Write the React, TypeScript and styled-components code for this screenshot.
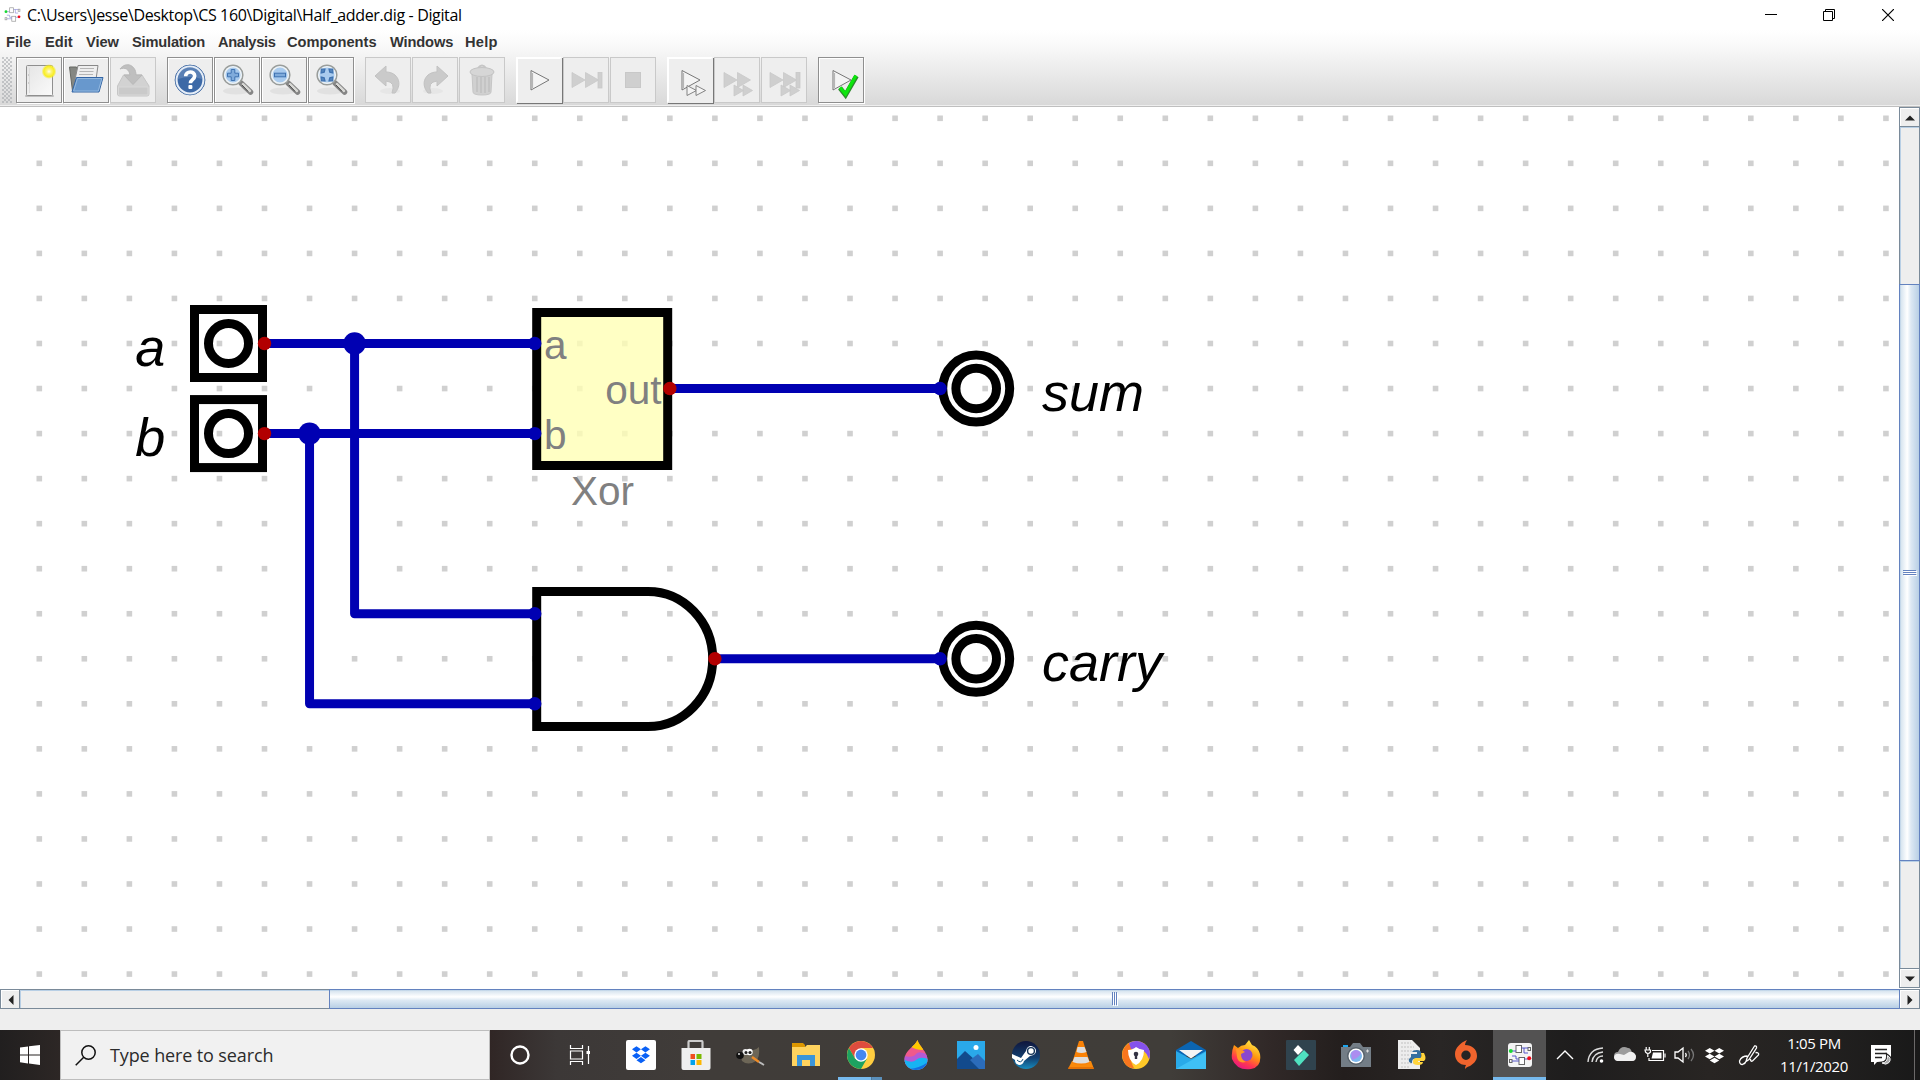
import React from "react";
import styled, { createGlobalStyle } from "styled-components";

const GlobalStyle = createGlobalStyle`
  html, body { margin: 0; padding: 0; overflow: hidden; background: #eee; }
  * { box-sizing: border-box; }
`;

const Screen = styled.div`
  width: 1920px;
  height: 1080px;
  display: flex;
  flex-direction: column;
  overflow: hidden;
  font-family: "Liberation Sans", Arial, sans-serif;
`;

const TitleBar = styled.header`
  height: 30px;
  display: flex;
  align-items: center;
  background: #fff;
`;
const TitleIcon = styled.div`
  width: 27px;
  height: 30px;
  padding: 6px 0 0 4px;
`;
const TitleText = styled.span`
  flex: 1;
  font-family: "Open Sans", "Noto Sans", sans-serif;
  font-size: 16px;
  line-height: 30px;
  letter-spacing: -0.36px;
  color: #000;
  white-space: nowrap;
`;
const WindowButtons = styled.div`
  display: flex;
  height: 30px;
  padding-right: 3px;
`;
const WindowButton = styled.div`
  width: 58.5px;
  display: flex;
  align-items: center;
  justify-content: center;
`;

const Chrome = styled.div`
  height: 77px;
  display: flex;
  flex-direction: column;
  background: linear-gradient(#fff 0%, #fafafa 18%, #d8d8d8 100%);
  border-bottom: 1px solid #bfbfbf;
  box-shadow: inset 0 -1px 0 #eee;
`;
const MenuBar = styled.nav`
  height: 26px;
  display: flex;
  padding-left: 6px;
  font-size: 14.67px;
  font-weight: 700;
  line-height: 25px;
  color: #333;
`;
const MenuItem = styled.span<{ $w: number; $tracking: number }>`
  flex: none;
  width: ${(p) => p.$w}px;
  letter-spacing: ${(p) => p.$tracking}px;
  white-space: nowrap;
`;
const menus = [
  { label: "File", w: 39, tracking: 0 },
  { label: "Edit", w: 41, tracking: 0 },
  { label: "View", w: 46, tracking: -0.1 },
  { label: "Simulation", w: 86, tracking: -0.2 },
  { label: "Analysis", w: 69, tracking: -0.35 },
  { label: "Components", w: 103, tracking: 0 },
  { label: "Windows", w: 75, tracking: -0.15 },
  { label: "Help", w: 40, tracking: 0.2 },
];

const ToolBar = styled.div`
  display: flex;
  height: 48px;
  padding: 1px 0 0 2px;
`;
const Grip = styled.div`
  width: 10px;
  height: 46px;
  margin-right: 4px;
  background-image: radial-gradient(circle at 1px 1px, #a6a9ad 0.5px, transparent 1px),
    radial-gradient(circle at 3px 3px, #a6a9ad 0.5px, transparent 1px);
  background-size: 4px 4px;
`;
const ToolGroup = styled.div`
  display: flex;
  gap: 1px;
  margin-right: 11px;
`;
type ToolMode = "normal" | "disabled" | "raised";
const edge: Record<ToolMode, string> = {
  normal: "border: 1px solid #8f8f8f; box-shadow: 1px 1px 0 #fff, inset 1px 1px 0 #fff;",
  disabled: "border: 1px solid #c9c9c9;",
  raised:
    "border: 2px solid; border-color: #fff #eee #eee #fff; box-shadow: 1px 1px 0 #777;",
};
const ToolButton = styled.div<{ $mode: ToolMode }>`
  width: 46px;
  height: 46px;
  display: flex;
  align-items: center;
  justify-content: center;
  background: #eee;
  ${(p) => edge[p.$mode]}
  svg {
    flex: none;
  }
`;

const Workspace = styled.main`
  height: 882px;
  display: flex;
  background: #fff;
`;
const Canvas = styled.div`
  width: 1899px;
  height: 881px;
  overflow: hidden;
`;
const VScroll = styled.div`
  width: 21px;
  height: 881px;
  display: flex;
  flex-direction: column;
  background: #eee;
  border: 1px solid #7a8a99;
  box-shadow: inset 1px 0 0 #b8cfe5;
`;
const HScroll = styled.div`
  height: 20px;
  display: flex;
  background: #eee;
  border: 1px solid #7a8a99;
  box-shadow: inset 0 1px 0 #b8cfe5;
`;
const ScrollButton = styled.div<{ $w?: number }>`
  flex: none;
  width: ${(p) => p.$w ?? 19}px;
  height: 18px;
  display: flex;
  align-items: center;
  justify-content: center;
  background: #eee;
  border: solid #fff;
  border-width: 1px 0 0 1px;
`;
const VTrack = styled.div<{ $size: number; $end?: boolean }>`
  flex: none;
  height: ${(p) => p.$size}px;
  border: solid #7a8a99;
  border-width: ${(p) => (p.$end ? "0 0 1px 0" : "1px 0 0 0")};
  box-shadow: inset 1px 1px 0 #b8cfe5;
`;
const VThumb = styled.div`
  flex: none;
  height: 577px;
  margin: 0 -1px;
  padding-top: 2px;
  display: flex;
  align-items: center;
  justify-content: center;
  border: 1px solid #6382bf;
  background: linear-gradient(90deg, #b8cfe5 0, #dbe7f1 8%, #fff 38%, #dce8f3 58%, #b8cfe5 100%);
`;
const HTrack = styled.div`
  flex: none;
  width: 310px;
  border-left: 1px solid #7a8a99;
  box-shadow: inset 1px 1px 0 #b8cfe5;
`;
const HThumb = styled.div`
  flex: none;
  width: 1571px;
  margin: -1px 0;
  padding-left: 2px;
  display: flex;
  align-items: center;
  justify-content: center;
  border: 1px solid #6382bf;
  background: linear-gradient(#b8cfe5 0, #dbe7f1 8%, #fff 38%, #dce8f3 58%, #b8cfe5 100%);
`;
const StatusBar = styled.div`
  height: 21px;
  background: #eee;
`;

const TaskBar = styled.footer`
  height: 50px;
  display: flex;
  background: linear-gradient(
    90deg,
    #211f1f 0,
    #302927 4%,
    #302625 25.5%,
    #3c3837 29%,
    #403c39 36%,
    #403d39 61%,
    #312928 66%,
    #231e1d 70%,
    #292625 75%,
    #1e1d1d 82%,
    #282523 89%,
    #242221 94%,
    #191919 100%
  );
`;
const StartButton = styled.div`
  width: 60px;
  display: flex;
  align-items: center;
  justify-content: center;
`;
const SearchBox = styled.div`
  width: 430px;
  display: flex;
  align-items: center;
  padding-left: 14px;
  border: 1px solid #bdbdbd;
  background: #f1f1f1;
`;
const SearchText = styled.span`
  margin-left: 14px;
  font-family: "Open Sans", "Noto Sans", sans-serif;
  font-size: 18px;
  letter-spacing: -0.12px;
  color: #2b2b2b;
  white-space: nowrap;
`;
const TaskSlot = styled.div<{ $w: number; $active?: boolean; $running?: boolean }>`
  width: ${(p) => p.$w}px;
  height: 50px;
  display: flex;
  flex: none;
  align-items: center;
  justify-content: center;
  background: ${(p) => (p.$active ? "#535252" : "transparent")};
  ${(p) => p.$active && "box-shadow: inset 0 -3px 0 #76b9ed;"}
  ${(p) =>
    p.$running &&
    `background: linear-gradient(90deg, #76b9ed 33px, #47647c 33px, #5a8fba 34px) 5px 47px / 44px 3px no-repeat;`}
`;
const Clock = styled.div`
  flex: none;
  width: 84px;
  height: 50px;
  padding-top: 2px;
  font-family: "Open Sans", "Noto Sans", sans-serif;
  font-size: 15px;
  line-height: 23px;
  letter-spacing: -0.35px;
  text-align: center;
  color: #fff;
`;
const ShowDesktop = styled.div`
  flex: none;
  width: 6px;
  margin-left: auto;
  border-left: 1px solid #6b6969;
`;

const Lens = ({ x, y }: { x: number; y: number }) => (
  <g transform={`translate(${x} ${y})`}>
    <circle cx="10" cy="10" r="9.8" fill="#a9cbee" stroke="#9a9d9a" strokeWidth="1.6" />
    <circle cx="10" cy="10" r="8.3" fill="none" stroke="#eef2f4" strokeWidth="1.6" />
  </g>
);

const Magnifier = ({ kind }: { kind: "in" | "out" | "fit" }) => (
  <svg width="36" height="36" viewBox="0 0 36 36">
    <ellipse cx="17" cy="29" rx="13" ry="3.5" fill="#000" opacity="0.05" />
    <path d="M22 21 L31.5 30" stroke="#858585" strokeWidth="5.5" strokeLinecap="round" />
    <path d="M24 22.2 L31 29" stroke="#d8d8d5" strokeWidth="2.5" strokeLinecap="round" />
    <path d="M23 23 L29 29.4" stroke="#4d4d4d" strokeWidth="1" />
    <Lens x={4} y={3} />
    {kind === "in" && (
      <path d="M12.2 7.5h3.6v3.7h3.7v3.6h-3.7v3.7h-3.6v-3.7H8.5v-3.6h3.7z" fill="#7fabdb" stroke="#3f72b0" />
    )}
    {kind === "out" && (
      <rect x="8.5" y="11.2" width="11" height="3.6" fill="#7fabdb" stroke="#3f72b0" />
    )}
    {kind === "fit" && (
      <path
        d="M8.2 11V7.2H12L11.2 10.2zM19.8 11V7.2H16L16.8 10.2zM8.2 15v3.8H12L11.2 15.8zM19.8 15v3.8H16L16.8 15.8z"
        fill="#5385bd"
        stroke="#3f72b0"
        strokeWidth="1.2"
      />
    )}
  </svg>
);

const NewIcon = () => (
  <svg width="38" height="38" viewBox="0 0 38 38">
    <defs>
      <linearGradient id="paper" x1="0" y1="0" x2="1" y2="1">
        <stop offset="0" stopColor="#e5e5e5" />
        <stop offset="1" stopColor="#fafafa" />
      </linearGradient>
      <radialGradient id="star">
        <stop offset="0" stopColor="#fffef0" />
        <stop offset="0.3" stopColor="#fdf47a" />
        <stop offset="0.7" stopColor="#f8ee20" />
        <stop offset="1" stopColor="#f5e828" stopOpacity="0" />
      </radialGradient>
    </defs>
    <rect x="5" y="34" width="29" height="2" rx="1" fill="#000" opacity="0.2" />
    <rect x="6.5" y="4.5" width="26" height="30" rx="1" fill="url(#paper)" stroke="#8f8f8f" />
    <path d="M9.5 7v25" stroke="#dcdcdc" />
    <path d="M8 14h1M8 22h1" stroke="#aaa" />
    <circle cx="29" cy="10.5" r="7.5" fill="url(#star)" />
  </svg>
);

const OpenIcon = () => (
  <svg width="38" height="38" viewBox="0 0 38 38">
    <path d="M2.5 6h7l1 2h13v22H5.5z" fill="#858782" stroke="#666863" />
    <path d="M11 4.5h20l-2 14H8z" fill="#eee" stroke="#888" />
    <path d="M13 7.5h14M12.5 10.5h14M12 13.5h14" stroke="#b5b5b5" />
    <path d="M9.5 16.5h26.5L32 31H5z" fill="#6898cd" stroke="#3465a4" />
    <path d="M10.5 17.5h24.3L31.3 30H6.6z" fill="none" stroke="#94b9df" strokeWidth="1" />
  </svg>
);

const SaveIcon = () => (
  <svg width="38" height="38" viewBox="0 0 38 38">
    <path d="M3.5 33V25l6-11H28l7 11v8q0 2-2 2H5.500q-2 0-2-2z" fill="#d2d2d2" stroke="#c6c6c6" />
    <path d="M4.5 26H34v8H4.5z" fill="#cacaca" stroke="#d8d8d8" />
    <path d="M6 8C12 0 22 4 22 14h6l-9 9.5L10 14h6C15 8 11 6 6 8z" fill="#bfbfbf" stroke="#b8b8b8" />
  </svg>
);

const HelpIcon = () => (
  <svg width="34" height="34" viewBox="0 0 34 34">
    <circle cx="17" cy="17" r="14.9" fill="#3d69a6" stroke="#3c66a0" strokeWidth="1" />
    <circle cx="17" cy="17" r="13.4" fill="none" stroke="#e6eef8" strokeWidth="2" />
    <path d="M5 16a12 12 0 0 1 24 0q-12-4-24 0z" fill="#7797c4" opacity="0.5" />
    <path
      d="M12.7 13.3c0-5.8 9-5.7 9-.2 0 3.5-4.3 3.7-4.3 7.2"
      fill="none"
      stroke="#fff"
      strokeWidth="3.6"
    />
    <rect x="15.4" y="22" width="4" height="4" rx="1" fill="#fff" />
  </svg>
);

const UndoIcon = ({ flip }: { flip?: boolean }) => (
  <svg width="36" height="36" viewBox="0 0 36 36">
    <g transform={flip ? "translate(36 0) scale(-1 1)" : undefined}>
      <ellipse cx="20" cy="29" rx="10" ry="3" fill="#e6e6e6" />
      <path d="M5 14L16 4v6C28 10 33 22 25 31h-3q4-11-6-12v5z" fill="#cacaca" stroke="#c2c2c2" />
    </g>
  </svg>
);

const TrashIcon = () => (
  <svg width="36" height="36" viewBox="0 0 36 36">
    <path d="M14 6q4-5 8 0" fill="none" stroke="#c6c6c6" strokeWidth="2" />
    <path d="M8 12h20l-1 18q0 3-9 3t-9-3z" fill="#d0d0d0" stroke="#c6c6c6" />
    <path d="M13 15v15M17 15v16M21 15v16M25 15v15" stroke="#c3c3c3" strokeWidth="1.8" />
    <ellipse cx="18" cy="10" rx="12" ry="4.5" fill="#d6d6d6" stroke="#c3c3c3" />
  </svg>
);

const PlayIcon = ({ kind }: { kind: "play" | "micro" | "check" }) => (
  <svg width="42" height="42" viewBox="0 0 42 42">
    <path d="M13 11.5V31l18-10z" fill="#f4f4f4" stroke="#777" strokeWidth="1" />
    <path d="M14.3 14v15" stroke="#b5b5b5" strokeWidth="1.6" />
    {kind === "micro" && (
      <g fill="#f4f4f4" stroke="#777" strokeWidth="0.9">
        <path d="M18 26.5v10l9.5-5z" />
        <path d="M27 26.5v10l9.5-5z" />
      </g>
    )}
    {kind === "check" && (
      <>
        <path d="M20 29l5.5 7L36.5 17" fill="none" stroke="#2c8a2c" strokeWidth="4.8" />
        <path d="M20 28.5l5.5 6.5L36 16.5" fill="none" stroke="#0de60d" strokeWidth="3.4" />
      </>
    )}
  </svg>
);
const FastIcon = ({ bar, small }: { bar?: boolean; small?: boolean }) => (
  <svg width="42" height="42" viewBox="0 0 42 42" fill="#cfcfcf" stroke="#c8c8c8" strokeWidth="0.8">
    <path d={bar ? "M7 13.5v15L20 21zM20.5 13.5v15L33.5 21z" : "M8 13.5v15L21 21zM21.5 13.5v15L34.5 21z"} />
    {bar && <rect x="33" y="13.5" width="4" height="15.5" />}
    {small && <path d="M18 26v11l9.5-5.5zM27 26v11l9.5-5.5z" />}
  </svg>
);
const StopIcon = () => (
  <svg width="42" height="42" viewBox="0 0 42 42">
    <rect x="13.5" y="13.5" width="15" height="15" fill="#cfcfcf" stroke="#c8c8c8" />
  </svg>
);

const tools: { icon: React.ReactNode; mode: ToolMode }[][] = [
  [
    { icon: <NewIcon />, mode: "normal" },
    { icon: <OpenIcon />, mode: "normal" },
    { icon: <SaveIcon />, mode: "disabled" },
  ],
  [
    { icon: <HelpIcon />, mode: "normal" },
    { icon: <Magnifier kind="in" />, mode: "normal" },
    { icon: <Magnifier kind="out" />, mode: "normal" },
    { icon: <Magnifier kind="fit" />, mode: "normal" },
  ],
  [
    { icon: <UndoIcon />, mode: "disabled" },
    { icon: <UndoIcon flip />, mode: "disabled" },
    { icon: <TrashIcon />, mode: "disabled" },
  ],
  [
    { icon: <PlayIcon kind="play" />, mode: "raised" },
    { icon: <FastIcon bar />, mode: "disabled" },
    { icon: <StopIcon />, mode: "disabled" },
  ],
  [
    { icon: <PlayIcon kind="micro" />, mode: "raised" },
    { icon: <FastIcon small />, mode: "disabled" },
    { icon: <FastIcon bar small />, mode: "disabled" },
  ],
  [{ icon: <PlayIcon kind="check" />, mode: "normal" }],
];

const GRID = 45.04;
const gx = (n: number) => 39.3 + n * GRID;
const gy = (n: number) => 11.3 + n * GRID;
const WIRE = "#0000b2";

const InputPin = ({ row, label }: { row: number; label: string }) => (
  <g>
    <text x="165.2" y={gy(row) + 22} textAnchor="end" fontSize="54" fontStyle="italic">
      {label}
    </text>
    <rect x="194.5" y={gy(row) - 34} width="68" height="68" fill="none" stroke="#000" strokeWidth="9" />
    <circle cx="228.5" cy={gy(row)} r="20" fill="none" stroke="#000" strokeWidth="9" />
  </g>
);
const OutputPin = ({ row, label }: { row: number; label: string }) => (
  <g>
    <circle cx="976.2" cy={gy(row)} r="33.5" fill="none" stroke="#000" strokeWidth="9" />
    <circle cx="976.2" cy={gy(row)} r="20.3" fill="none" stroke="#000" strokeWidth="9" />
    <text x="1042" y={gy(row) + 22} fontSize="54" fontStyle="italic">
      {label}
    </text>
  </g>
);

const Circuit = () => {
  const dots: React.ReactNode[] = [];
  for (let r = 0; r < 20; r++)
    for (let c = 0; c < 42; c++)
      dots.push(
        <rect key={`${r}-${c}`} x={gx(c) - 2.8} y={gy(r) - 2.8} width="5.6" height="5.6" fill="#d0d0d0" />
      );
  const inputs: [number, number][] = [
    [11, 5],
    [11, 7],
    [11, 11],
    [11, 13],
    [20, 6],
    [20, 12],
  ];
  const outputs: [number, number][] = [
    [5, 5],
    [5, 7],
    [14, 6],
    [15, 12],
  ];
  return (
    <svg width="1899" height="881" viewBox="0 0 1899 881" fontFamily='"Liberation Sans", Arial, sans-serif'>
      {dots}
      <rect x="536.7" y="205.5" width="131" height="153" fill="#ffffb4" fillOpacity="0.78" stroke="#000" strokeWidth="9" />
      <path
        d="M536.7 484.5H648C683.5 484.5 712.7 514.5 712.7 552S683.5 619.5 648 619.5H536.7z"
        fill="none"
        stroke="#000"
        strokeWidth="9"
      />
      <InputPin row={5} label="a" />
      <InputPin row={7} label="b" />
      <OutputPin row={6} label="sum" />
      <OutputPin row={12} label="carry" />
      <g fill="none" stroke={WIRE} strokeWidth="9" strokeLinejoin="round">
        <path d={`M${gx(5) + 4} ${gy(5)}H${gx(11)}`} />
        <path d={`M${gx(5) + 4} ${gy(7)}H${gx(11)}`} />
        <path d={`M${gx(7)} ${gy(5)}V${gy(11)}H${gx(11)}`} />
        <path d={`M${gx(6)} ${gy(7)}V${gy(13)}H${gx(11)}`} />
        <path d={`M${gx(14)} ${gy(6)}H${gx(20)}`} />
        <path d={`M${gx(15)} ${gy(12)}H${gx(20)}`} />
      </g>
      <circle cx={gx(7)} cy={gy(5)} r="11.2" fill={WIRE} />
      <circle cx={gx(6)} cy={gy(7)} r="11.2" fill={WIRE} />
      {inputs.map(([c, r]) => (
        <circle key={`${c}-${r}`} cx={gx(c)} cy={gy(r)} r="6.7" fill={WIRE} />
      ))}
      {outputs.map(([c, r]) => (
        <circle key={`${c}-${r}`} cx={gx(c)} cy={gy(r)} r="6.7" fill="#b20000" />
      ))}
      <g fill="#808080" fontSize="40.5">
        <text x="544" y="251.5">a</text>
        <text x="544" y="341.5">b</text>
        <text x="661.5" y="296.5" textAnchor="end">out</text>
        <text x="602.5" y="398.4" textAnchor="middle">Xor</text>
      </g>
    </svg>
  );
};

const Arrow = ({ dir }: { dir: "up" | "down" | "left" | "right" }) => {
  const d = {
    up: "M0 7.5L5 2.5L10 7.5z",
    down: "M0 2.5L5 7.5L10 2.5z",
    left: "M7.5 0L2.5 5L7.5 10z",
    right: "M2.5 0L7.5 5L2.5 10z",
  }[dir];
  return (
    <svg width="10" height="10" viewBox="0 0 10 10">
      <path d={d} fill="#222" />
    </svg>
  );
};

const DigitalLogo = ({ size, plate }: { size: number; plate?: boolean }) => (
  <svg width={size} height={size} viewBox="0 0 24 24">
    {plate && <rect width="24" height="24" rx="3" fill="#f4f4f4" />}
    <g fill="none" stroke={plate ? "#666" : "#999"} strokeWidth="1">
      <rect x="8" y="2.5" width="5.5" height="7" fill="#fff" />
      <rect x="11" y="14.5" width="5.5" height="7" fill="#fff" />
      <rect x="20" y="4.5" width="2.5" height="3" />
      <rect x="1.5" y="16.5" width="2.5" height="3" />
    </g>
    <path
      d="M4 8h4M13.5 5H20M16 5v5h4M4 13h4v3h3M4 18h7M16.5 16H20"
      fill="none"
      stroke={plate ? "#4747c5" : "#8a8ad6"}
      strokeWidth="0.9"
    />
    <circle cx="2.8" cy="8" r="2" fill="#18d933" />
    <circle cx="21.2" cy="15.3" r="2" fill="#f00b1b" />
  </svg>
);

const dropboxPath =
  "M8 2l8 5-8 5-8-5zM24 2l8 5-8 5-8-5zM8 12.5l8 5-8 5-8-5zM24 12.5l8 5-8 5-8-5zM16 19.5l8 5-8 5-8-5z";

const Icon = ({ children }: { children: React.ReactNode }) => (
  <svg width="30" height="30" viewBox="0 0 30 30">
    {children}
  </svg>
);

const DropboxApp = () => (
  <Icon>
    <rect width="30" height="30" rx="2" fill="#fff" />
    <path transform="translate(6 5) scale(.56 .62)" d={dropboxPath} fill="#0a61f6" />
  </Icon>
);
const StoreApp = () => (
  <Icon>
    <path d="M7.500 10V2q0-1 1-1h12q1 0 1 1v8" fill="none" stroke="#ccc" strokeWidth="2.200" />
    <path d="M.5 8h29v20q0 2-2 2h-25q-2 0-2-2z" fill="#efefef" />
    <path fill="#f04e1f" d="M9.5 14H14v5H9.5z" />
    <path fill="#7bb900" d="M15.5 14h5v5h-5z" />
    <path fill="#00a2ed" d="M9.5 20H14v5H9.5z" />
    <path fill="#fcb700" d="M15.5 20h5v5h-5z" />
  </Icon>
);
const GimpApp = () => (
  <Icon>
    <path d="M4 13q7 2 11-3 4 1 8-3 1 10-3 14-8 5-14 0z" fill="#6d6657" />
    <circle cx="9.5" cy="12" r="3" fill="#eee" />
    <circle cx="13.5" cy="12" r="3.2" fill="#fff" />
    <circle cx="10" cy="12.5" r="1.5" fill="#222" />
    <circle cx="14" cy="12.5" r="1.6" fill="#222" />
    <ellipse cx="4" cy="15.5" rx="3.8" ry="3.4" fill="#111" />
    <circle cx="3" cy="14" r="1" fill="#ddd" />
    <path d="M16 17l7 5" stroke="#ee8c28" strokeWidth="2.5" />
    <path d="M23 22l5 3" stroke="#bbb" strokeWidth="2" />
  </Icon>
);
const ExplorerApp = () => (
  <Icon>
    <path d="M1 3h11l2 2v3H1z" fill="#dd9700" />
    <path d="M1 7h13l2-2h13v21H1z" fill="#ffd35e" />
    <path d="M6 26V15h18v11h-5v-6h-8v6z" fill="#3b95d9" />
  </Icon>
);
const ChromeApp = () => (
  <Icon>
    <circle cx="15" cy="15" r="14" fill="#ffcd40" />
    <path d="M2.9 8A14 14 0 0 1 27.1 8H15L9 18.5z" fill="#de4c3e" />
    <path d="M2.9 8A14 14 0 0 0 15 29L21 18.5Q15 23 9 18.5z" fill="#1da261" />
    <circle cx="15" cy="15" r="6.7" fill="#fff" />
    <circle cx="15" cy="15" r="5.4" fill="#4687f0" />
  </Icon>
);
const PaintApp = () => (
  <Icon>
    <defs>
      <clipPath id="drop">
        <path d="M16.5 0C18 6 26.500 12 26.500 19.500C26.500 26 21 30 15 30S3.500 26 3.500 19C3.500 11 14 6 16.500 0z" />
      </clipPath>
    </defs>
    <g clipPath="url(#drop)">
      <rect width="30" height="30" fill="#f0598c" />
      <path d="M10 0h12v10q-8 0-13-4z" fill="#ffc800" />
      <path d="M3 16q9 2 12-2t12 1v10H2z" fill="#b45ad6" />
      <path d="M2 19q9 5 13 1t12-1v12H2z" fill="#17b4f2" />
      <path d="M8 29q11-1 19-7v8H10z" fill="#1470e0" />
    </g>
  </Icon>
);
const PhotosApp = () => (
  <Icon>
    <rect x="1" y="1" width="28" height="28" fill="#2aa9ea" />
    <path d="M1 19l8-8 20 18H1z" fill="#124a8c" />
    <path d="M14 20l8-6 7 7v8h-6z" fill="#2b6cbb" />
    <circle cx="20" cy="7.5" r="2.5" fill="#fff" />
  </Icon>
);
const SteamApp = () => (
  <Icon>
    <defs>
      <linearGradient id="steam" x1="0" x2="0" y1="0" y2="1">
        <stop offset="0" stopColor="#10163c" />
        <stop offset="0.6" stopColor="#123f70" />
        <stop offset="1" stopColor="#168bbd" />
      </linearGradient>
    </defs>
    <circle cx="15" cy="15" r="14" fill="url(#steam)" />
    <path d="M1 14l9 4 5-7q1-5 5-5 5 1 5 5t-6 5l-6 5q-1 4-5 4-4-1-4-5l-3-2z" fill="#fff" />
    <circle cx="20" cy="11" r="3.4" fill="none" stroke="#153457" strokeWidth="1.4" />
    <path d="M6 20q4 4 6-1" fill="none" stroke="#165481" />
  </Icon>
);
const VlcApp = () => (
  <Icon>
    <path d="M6 21h19l3 8H2z" fill="#f98a0c" />
    <path d="M13 1h4l7 22q-9 4-18 0z" fill="#fa8206" />
    <path d="M11.5 7h7l2 5q-5 2-10 0zM8.5 17h13l2 5q-8 3-17 0z" fill="#ddd" />
    <path d="M2 28h26" stroke="#d25c00" />
  </Icon>
);
const BrowserApp = () => (
  <Icon>
    <circle cx="15" cy="15" r="14" fill="#ffc928" />
    <path d="M8 3Q-4 12 5 25q4 4 8 3Q7 17 11 9z" fill="#f8761f" />
    <path d="M8 3q9-5 17 2 6 6 3 14-4-13-18-10z" fill="#8552ed" />
    <path d="M7 10q5 0 8-3 4 3 8 3 0 11-8 15-8-4-8-15z" fill="#fff" />
    <circle cx="15" cy="14" r="2.3" fill="#333344" />
    <path d="M15 14v5" stroke="#333344" strokeWidth="2.4" />
  </Icon>
);
const MailApp = () => (
  <Icon>
    <path d="M0 10L15 1l15 9v6H0z" fill="#0b65b2" />
    <path d="M0 11l15 8 15-8v18H0z" fill="#29aae9" />
    <path d="M3 10h24L15 18.5z" fill="#f4f4f4" />
    <path d="M0 29l30-17v17z" fill="#3fc0f5" />
  </Icon>
);
const FirefoxApp = () => (
  <Icon>
    <defs>
      <linearGradient id="fox" x1="0.8" y1="0" x2="0.3" y2="1">
        <stop offset="0" stopColor="#fff44f" />
        <stop offset="0.45" stopColor="#ff980e" />
        <stop offset="0.75" stopColor="#ff3750" />
        <stop offset="1" stopColor="#e31587" />
      </linearGradient>
    </defs>
    <path d="M3 5l4 3q3-3 7-3l4-5 3 5q6 2 8 9 2 13-9 15Q6 31 1 19 0 12 3 5z" fill="url(#fox)" />
    <circle cx="15.5" cy="15" r="6" fill="#8b48ce" />
    <path d="M5 9q6 0 9 3l-4 2q0 6 5 8-8 2-9-5z" fill="#ff9827" />
  </Icon>
);
const FilmoraApp = () => (
  <Icon>
    <rect width="30" height="30" rx="1" fill="#30434e" />
    <path d="M12 5l5 5-5 5-4.5-5z" fill="#fff" />
    <path d="M8 20l10-10 5 5-10 11z" fill="#4fe2c1" />
  </Icon>
);
const CameraApp = () => (
  <Icon>
    <path d="M2 5h5v3H2z" fill="#1da5ed" />
    <path d="M0 7h9l3-4h7l3 4h8v20H0z" fill="#737d86" />
    <circle cx="15" cy="16" r="9" fill="#59636c" />
    <circle cx="15" cy="16" r="7.5" fill="#fff" />
    <circle cx="15" cy="16" r="6" fill="#7eb8ed" />
    <path d="M10 13q5-6 10 0-2 5-9 7z" fill="#ac8df0" />
    <path d="M25 11h3M26.5 9.5v3" stroke="#ddd" />
  </Icon>
);
const PythonApp = () => (
  <Icon>
    <path d="M2 0h14l8 8v21H2z" fill="#ededed" />
    <path d="M5 3h10M5 7h13M5 11h16M5 15h8M5 19h8M5 23h13M5 27h8" stroke="#c1c1c1" strokeDasharray="2 1" />
    <path d="M15 17v-3h6v-2h-5q1-2 5-2 4 0 4 3v4q0 2-3 2h-4q-2 0-2 4-4 0-3-4z" fill="#356f9f" />
    <path d="M25 13h3q3 6 0 8h-6v1h5q0 3-5 3t-5-3q0-4 3-4h4q2 0 1-5z" fill="#ffd43b" />
  </Icon>
);
const OriginApp = () => (
  <Icon>
    <path
      fillRule="evenodd"
      d="M16 0q-2 3-2 5c7 0 12 4 12 11 0 5-4 8-7 10-4 1-5 3-5 4 0-2 0-3 1-5C8 25 4 20 4 14 4 8 9 3 16 0zM15 10.5a4.7 4.7 0 1 0 0 9.4 4.7 4.7 0 0 0 0-9.4z"
      fill="#f1642d"
    />
  </Icon>
);
const apps = [
  DropboxApp, StoreApp, GimpApp, ExplorerApp, ChromeApp, PaintApp, PhotosApp, SteamApp, VlcApp,
  BrowserApp, MailApp, FirefoxApp, FilmoraApp, CameraApp, PythonApp,
];

const WifiIcon = () => (
  <svg width="22" height="22" viewBox="0 0 22 22" fill="none" stroke="#ddd" strokeWidth="1.4">
    <path d="M3 18Q4 5 18 4M7 18Q8 9 18 8M11 18q1-6 7-6" />
    <circle cx="16.5" cy="17" r="1.8" fill="#fff" stroke="none" />
  </svg>
);
const CloudIcon = () => (
  <svg width="22" height="16" viewBox="0 0 22 16">
    <path d="M4 13a4 4 0 0 1 0-8q3-7 10-4 3 0 4 5 4 1 4 4 0 4-4 4z" fill="#9c9c9c" />
    <path d="M3 14q-3-1-3-4 1-4 6-3l4 1 5-3q5-1 7 4 0 5-4 5z" fill="#f0f0f0" />
  </svg>
);
const BatteryIcon = () => (
  <svg width="22" height="18" viewBox="0 0 22 18" fill="none" stroke="#fff" strokeWidth="1.2">
    <path d="M8 4.500h11.500v10H5V12" />
    <path d="M21 7.500v4" />
    <path d="M9 6.500h8.500v6H7.500z" fill="#fff" stroke="none" />
    <path d="M2.200 1v3M5.300 1v3M1 4h5.500v2q-2.500 3-5 0zM3.800 7v4" />
  </svg>
);
const VolumeIcon = () => (
  <svg width="24" height="20" viewBox="0 0 24 20" fill="none" stroke="#fff" strokeWidth="1.3">
    <path d="M2 7h3l5-4v14l-5-4H2zM12.5 8q1.5 2 0 4" />
    <path d="M15 6q3 4 0 8M18 4q5 6 0 12" stroke="#777" />
  </svg>
);
const PenIcon = () => (
  <svg width="22" height="22" viewBox="0 0 22 22" fill="none" stroke="#fff" strokeWidth="1.3">
    <path d="M9 14L16.500 2q2.500-.5 2 2l-7.500 11.500-3 2zM9.500 12q-6 0-8 5 0 3.500 3 3.500 3-1 4-4M12.500 15q0 3 2 2l6-6q1-2.500-3-2.500" />
  </svg>
);
const NoteIcon = () => (
  <svg width="22" height="22" viewBox="0 0 22 22">
    <path d="M1 1h20v17H7l-3 3v-3H1z" fill="#fff" />
    <path d="M5 5.5h12M5 9.5h12M5 13.5h7" stroke="#232222" strokeWidth="1.3" />
    <path d="M17.500 11.500q4.500 3 1.500 7-3 3-7 .5 6-.5 5.500-7.500z" fill="#bbb" stroke="#232222" strokeWidth="3" />
    <path d="M17.500 11.500q4.500 3 1.500 7-3 3-7 .5 6-.5 5.500-7.500z" fill="#aaa" stroke="#fff" strokeWidth="0.900" />
  </svg>
);

export default function App() {
  return (
    <Screen>
      <GlobalStyle />
      <TitleBar>
        <TitleIcon>
          <DigitalLogo size={17} />
        </TitleIcon>
        <TitleText>{"C:\\Users\\Jesse\\Desktop\\CS 160\\Digital\\Half_adder.dig - Digital"}</TitleText>
        <WindowButtons>
          <WindowButton>
            <svg width="12" height="14"><path d="M0 6.5h12" stroke="#000" /></svg>
          </WindowButton>
          <WindowButton>
            <svg width="12" height="12" fill="none" stroke="#000">
              <path d="M.5 2.5h9v9h-9zM2.5 2.5v-2h9v9h-2" />
            </svg>
          </WindowButton>
          <WindowButton>
            <svg width="12" height="12"><path d="M0 0l12 12M12 0L0 12" stroke="#000" strokeWidth="1.2" /></svg>
          </WindowButton>
        </WindowButtons>
      </TitleBar>
      <Chrome>
        <MenuBar>
          {menus.map((m) => (
            <MenuItem key={m.label} $w={m.w} $tracking={m.tracking}>
              {m.label}
            </MenuItem>
          ))}
        </MenuBar>
        <ToolBar>
          <Grip />
          {tools.map((group, i) => (
            <ToolGroup key={i}>
              {group.map((t, j) => (
                <ToolButton key={j} $mode={t.mode}>
                  {t.icon}
                </ToolButton>
              ))}
            </ToolGroup>
          ))}
        </ToolBar>
      </Chrome>
      <Workspace>
        <Canvas>
          <Circuit />
        </Canvas>
        <VScroll>
          <ScrollButton>
            <Arrow dir="up" />
          </ScrollButton>
          <VTrack $size={158} />
          <VThumb>
            <svg width="14" height="7">
              <path d="M1 1.5h13M1 3.5h13M1 5.5h13" stroke="#fff" />
              <path d="M0 .5h13M0 2.5h13M0 4.5h13" stroke="#6382bf" />
            </svg>
          </VThumb>
          <VTrack $size={108} $end />
          <ScrollButton>
            <Arrow dir="down" />
          </ScrollButton>
        </VScroll>
      </Workspace>
      <HScroll>
        <ScrollButton $w={18}>
          <Arrow dir="left" />
        </ScrollButton>
        <HTrack />
        <HThumb>
          <svg width="7" height="14">
            <path d="M1.5 1v13M3.5 1v13M5.5 1v13" stroke="#fff" />
            <path d="M.5 0v13M2.5 0v13M4.5 0v13" stroke="#6382bf" />
          </svg>
        </HThumb>
        <ScrollButton $w={19}>
          <Arrow dir="right" />
        </ScrollButton>
      </HScroll>
      <StatusBar />
      <TaskBar>
        <StartButton>
          <svg width="20" height="20" viewBox="0 0 20 20" fill="#fff">
            <path d="M0 2.6L8 1.4V9.4H0zM9 1.2L20 0v9.4H9zM0 10.4h8v8L0 17.3zM9 10.4h11V20L9 18.6z" />
          </svg>
        </StartButton>
        <SearchBox>
          <svg width="21" height="21" viewBox="0 0 21 21" fill="none" stroke="#111" strokeWidth="1.5">
            <circle cx="13.5" cy="7.5" r="6.7" />
            <path d="M8.7 12.3L.7 20.3" />
          </svg>
          <SearchText>Type here to search</SearchText>
        </SearchBox>
        <TaskSlot $w={60}>
          <svg width="20" height="20"><circle cx="10" cy="10" r="8.5" fill="none" stroke="#fff" strokeWidth="2.4" /></svg>
        </TaskSlot>
        <TaskSlot $w={60}>
          <svg width="22" height="20" fill="none" stroke="#fff" strokeWidth="1.2">
            <path d="M1.5 0v3.5h12V0M1.5 20v-3.5h12V20M1.5 6h12v8h-12zM19.5 1v18" />
            <path d="M17.5 6h3.5v3h-3.5z" fill="#fff" stroke="none" />
          </svg>
        </TaskSlot>
        <TaskSlot $w={3} />
        {apps.map((AppIcon, i) => (
          <TaskSlot key={i} $w={55} $running={AppIcon === ChromeApp}>
            <AppIcon />
          </TaskSlot>
        ))}
        <TaskSlot $w={55}>
          <OriginApp />
        </TaskSlot>
        <TaskSlot $w={53} $active>
          <DigitalLogo size={24} plate />
        </TaskSlot>
        <TaskSlot $w={37}>
          <svg width="18" height="12"><path d="M1 10l8-8 8 8" fill="none" stroke="#fff" strokeWidth="1.4" /></svg>
        </TaskSlot>
        <TaskSlot $w={25}><WifiIcon /></TaskSlot>
        <TaskSlot $w={34}><CloudIcon /></TaskSlot>
        <TaskSlot $w={26}><BatteryIcon /></TaskSlot>
        <TaskSlot $w={34}><VolumeIcon /></TaskSlot>
        <TaskSlot $w={24}>
          <svg width="19" height="17" viewBox="0 0 32 31" preserveAspectRatio="none"><path d={dropboxPath} fill="#fff" /></svg>
        </TaskSlot>
        <TaskSlot $w={46}><PenIcon /></TaskSlot>
        <Clock>
          <div>1:05 PM</div>
          <div>11/1/2020</div>
        </Clock>
        <TaskSlot $w={49}><NoteIcon /></TaskSlot>
        <ShowDesktop />
      </TaskBar>
    </Screen>
  );
}
